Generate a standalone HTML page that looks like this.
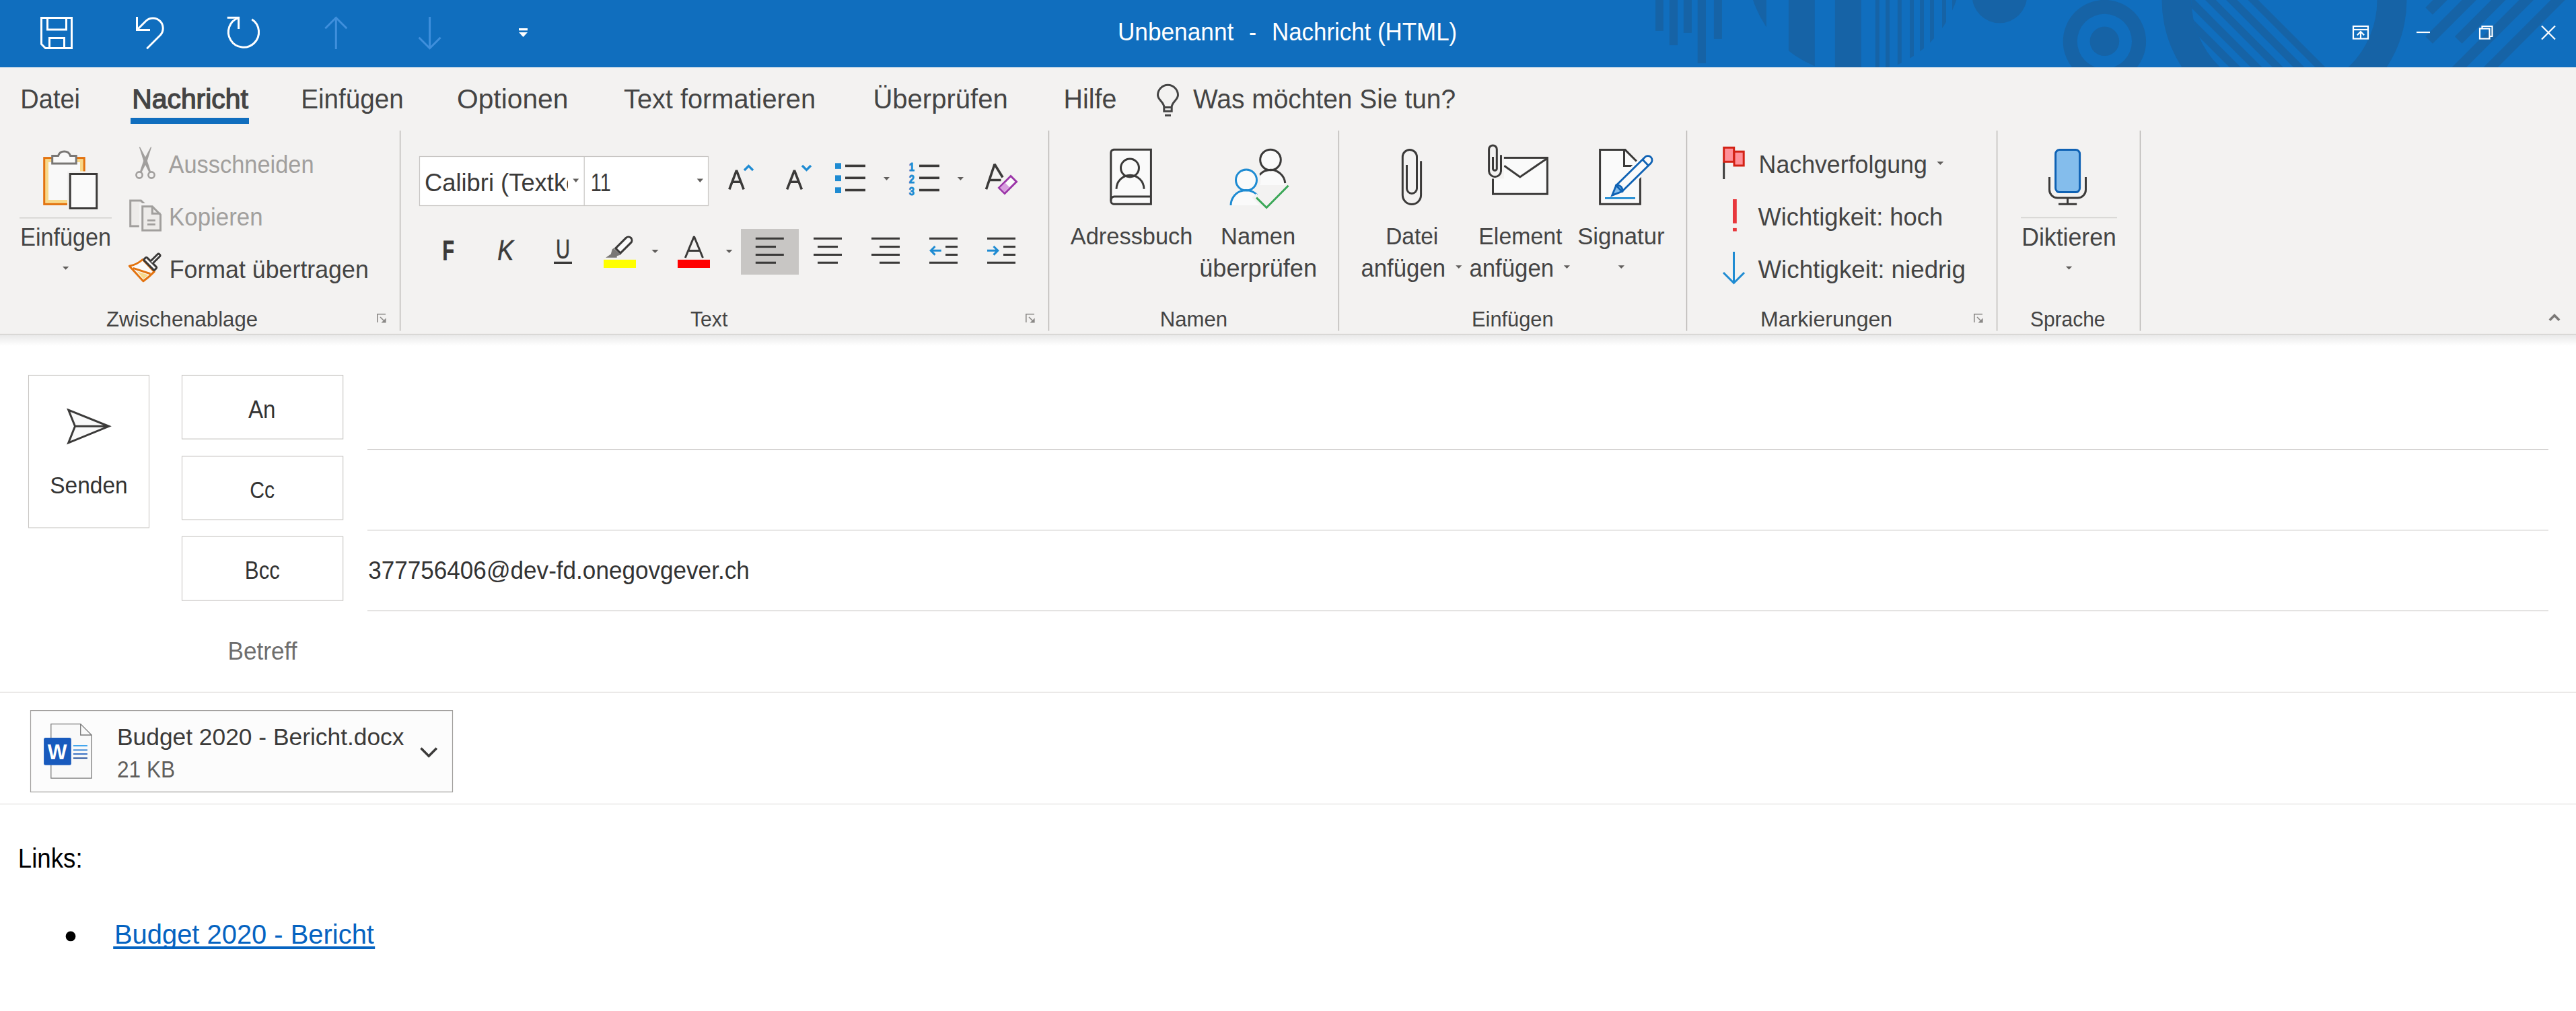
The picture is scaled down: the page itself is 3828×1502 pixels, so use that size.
<!DOCTYPE html>
<html><head><meta charset="utf-8"><title>Unbenannt - Nachricht (HTML)</title>
<style>
html,body{margin:0;padding:0;width:3828px;height:1502px;overflow:hidden;background:#fff;}
svg{display:block;font-family:"Liberation Sans",sans-serif;}
</style></head><body>
<svg width="3828" height="1502" viewBox="0 0 3828 1502">
<rect x="0" y="0" width="3828" height="1502" fill="#ffffff"/>
<rect x="0" y="0" width="3828" height="100" fill="#106ebe"/>
<defs>
<clipPath id="tb"><rect x="0" y="0" width="3828" height="100"/></clipPath>
<clipPath id="c1"><circle cx="2756.1" cy="-49.5" r="159"/></clipPath>
<clipPath id="c2in"><circle cx="3394.5" cy="0" r="138"/></clipPath>
</defs>
<g fill="#1663a6" clip-path="url(#tb)">
<rect x="2460.1" y="0" width="11.7" height="45.9"/>
<rect x="2480.8" y="0" width="12.2" height="67.1"/>
<rect x="2501.8" y="0" width="12.1" height="48.9"/>
<rect x="2522.7" y="0" width="12.3" height="94"/>
<rect x="2546.9" y="0" width="12.0" height="57.9"/>
<g clip-path="url(#c1)">
<rect x="2590" y="-10" width="34.9" height="120"/>
<rect x="2657.9" y="-10" width="38.9" height="120"/>
<rect x="2726.9" y="-10" width="38.9" height="120"/>
<rect x="2786.8" y="-10" width="6.0" height="120"/>
<rect x="2802" y="-10" width="6.0" height="120"/>
<rect x="2819.8" y="-10" width="6.0" height="120"/>
<rect x="2838" y="-10" width="6.0" height="120"/>
<rect x="2853" y="-10" width="6.0" height="120"/>
<rect x="2868" y="-10" width="6.0" height="120"/>
<rect x="2886" y="-10" width="6.0" height="120"/>
<rect x="2901" y="-10" width="6.4" height="120"/>
</g>
<circle cx="2971.4" cy="-6.5" r="40.8"/>
<path fill-rule="evenodd" d="M3189.1 61.5 A61.7 61.7 0 1 0 3065.7 61.5 A61.7 61.7 0 1 0 3189.1 61.5 Z M3168 61.5 A40.6 40.6 0 1 0 3086.8 61.5 A40.6 40.6 0 1 0 3168 61.5 Z"/>
<circle cx="3127.4" cy="61.3" r="21.8"/>
<path fill-rule="evenodd" d="M3576.5 0 A182 182 0 1 0 3212.5 0 A182 182 0 1 0 3576.5 0 Z M3532.5 0 A138 138 0 1 0 3256.5 0 A138 138 0 1 0 3532.5 0 Z"/>
<g clip-path="url(#c2in)">
<path d="M3181 0 L3197 0 L3397 200 L3381 200 Z"/>
<path d="M3213.1 0 L3230 0 L3430 200 L3413.1 200 Z"/>
<path d="M3244.8 0 L3261.6 0 L3461.6 200 L3444.8 200 Z"/>
<path d="M3277 0 L3292.8 0 L3492.8 200 L3477 200 Z"/>
<path d="M3308.1 0 L3324.5 0 L3524.5 200 L3508.1 200 Z"/>
<path d="M3340.5 0 L3355.6 0 L3555.6 200 L3540.5 200 Z"/>
</g>
<path d="M3615.5 0 L3636.7 0 L3614.90 21.80 L3604.30 11.20 Z"/>
<path d="M3658.5 0 L3679.8 0 L3614.95 64.85 L3604.30 54.20 Z"/>
<path d="M3702.1 0 L3723.4 0 L3658.55 64.85 L3647.90 54.20 Z"/>
<path d="M3743.5 0 L3765 0 L3565 200 L3543.5 200 Z"/>
<path d="M3790.5 0 L3811.7 0 L3611.7 200 L3590.5 200 Z"/>
</g>
<g fill="none" stroke="#ffffff" stroke-width="3">
<path d="M61.5 26.5 H106.5 V71.5 H67.5 L61.5 65.5 Z"/>
<path d="M70.5 26.5 V44 H98.5 V26.5"/>
<path d="M73.5 71.5 V56.5 H95.5 V71.5"/>
<path d="M203.5 25 V44.5 H223"/>
<path d="M203.5 44.5 L217 31 A15 15 0 0 1 238.2 52.2 L218.2 72.3"/>
<path d="M337.7 26.3 H354.6 V43"/>
<path d="M354.6 26.3 A22.6 22.6 0 1 0 374.3 28.7"/>
</g>
<g fill="none" stroke="#3f8fdc" stroke-width="3">
<path d="M499.3 26 V73"/><path d="M483.3 42.3 L499.3 26.3 L515.3 42.3"/>
<path d="M638.6 25 V72"/><path d="M622.6 55.7 L638.6 71.7 L654.6 55.7"/>
</g>
<rect x="771" y="42" width="13" height="3.3" fill="#fff"/><path d="M771 48 H784 L777.5 55 Z" fill="#fff"/>
<text x="1660.90" y="59.50" font-size="37.78" fill="#ffffff" textLength="172.38" lengthAdjust="spacingAndGlyphs">Unbenannt</text>
<text x="1856.00" y="59.50" font-size="37.50" fill="#ffffff" textLength="11.03" lengthAdjust="spacingAndGlyphs">-</text>
<text x="1890.00" y="59.50" font-size="37.78" fill="#ffffff" textLength="275.16" lengthAdjust="spacingAndGlyphs">Nachricht (HTML)</text>
<g fill="none" stroke="#ffffff" stroke-width="2.2">
<rect x="3497" y="39" width="22" height="18.5"/><path d="M3497 44 H3519"/><path d="M3508 57 V47.5 M3502.8 52.3 L3508 47 L3513.2 52.3"/>
<path d="M3591 48 H3611"/>
<rect x="3685" y="42.5" width="14.5" height="15"/><path d="M3688.5 42.5 V39 H3703.5 V54 H3699.5"/>
<path d="M3777 38.5 L3797 58.5 M3797 38.5 L3777 58.5"/>
</g>
<rect x="0" y="100" width="3828" height="396" fill="#f3f2f1"/>
<text x="30.30" y="160.90" font-size="39.72" fill="#444444" textLength="88.75" lengthAdjust="spacingAndGlyphs">Datei</text>
<text x="196.30" y="160.90" font-size="39.72" fill="#444444" textLength="172.48" lengthAdjust="spacingAndGlyphs" stroke="#444444" stroke-width="1.3">Nachricht</text>
<rect x="194" y="175" width="176" height="9" fill="#106ebe"/>
<text x="447.20" y="160.90" font-size="39.72" fill="#444444" textLength="152.62" lengthAdjust="spacingAndGlyphs">Einfügen</text>
<text x="679.00" y="160.90" font-size="39.72" fill="#444444" textLength="165.42" lengthAdjust="spacingAndGlyphs">Optionen</text>
<text x="927.00" y="160.90" font-size="39.72" fill="#444444" textLength="285.00" lengthAdjust="spacingAndGlyphs">Text formatieren</text>
<text x="1297.40" y="160.90" font-size="39.72" fill="#444444" textLength="200.35" lengthAdjust="spacingAndGlyphs">Überprüfen</text>
<text x="1580.60" y="160.90" font-size="39.72" fill="#444444" textLength="78.87" lengthAdjust="spacingAndGlyphs">Hilfe</text>
<text x="1773.00" y="160.90" font-size="39.72" fill="#444444" textLength="390.14" lengthAdjust="spacingAndGlyphs">Was möchten Sie tun?</text>
<g fill="none" stroke="#444444" stroke-width="3"><path d="M1729.8 159 C1729.8 151.5 1720.5 148.5 1720.5 141.3 A15 15 0 1 1 1750.5 141.3 C1750.5 148.5 1741.2 151.5 1741.2 159 V165.3 H1729.8 Z"/><path d="M1729.8 159.5 H1741.2"/><path d="M1731 171.4 H1740"/></g>
<g fill="#b8b6b4">
<rect x="593.9" y="194" width="1.4" height="297.6"/>
<rect x="1557.8" y="194" width="1.4" height="297.6"/>
<rect x="1988.7" y="194" width="1.4" height="297.6"/>
<rect x="2505.8" y="194" width="1.4" height="297.6"/>
<rect x="2966.9" y="194" width="1.4" height="297.6"/>
<rect x="3179.7" y="194" width="1.4" height="297.6"/>
</g>
<rect x="0" y="495.9" width="3828" height="1.3" fill="#d2d0ce"/>
<defs><linearGradient id="sh" x1="0" y1="0" x2="0" y2="1"><stop offset="0" stop-color="#000" stop-opacity="0.09"/><stop offset="1" stop-color="#000" stop-opacity="0"/></linearGradient></defs>
<rect x="0" y="497" width="3828" height="17" fill="url(#sh)"/>
<text x="158.00" y="485.10" font-size="32.08" fill="#444444" textLength="225.06" lengthAdjust="spacingAndGlyphs">Zwischenablage</text>
<text x="1026.00" y="485.10" font-size="32.08" fill="#444444" textLength="55.34" lengthAdjust="spacingAndGlyphs">Text</text>
<text x="1723.80" y="485.10" font-size="32.08" fill="#444444" textLength="100.41" lengthAdjust="spacingAndGlyphs">Namen</text>
<text x="2187.00" y="485.10" font-size="32.08" fill="#444444" textLength="121.65" lengthAdjust="spacingAndGlyphs">Einfügen</text>
<text x="2616.00" y="485.10" font-size="32.08" fill="#444444" textLength="196.17" lengthAdjust="spacingAndGlyphs">Markierungen</text>
<text x="3017.00" y="485.10" font-size="32.08" fill="#444444" textLength="111.53" lengthAdjust="spacingAndGlyphs">Sprache</text>
<g fill="none" stroke="#8a8886" stroke-width="1.6"><path d="M560.8 479 V466.8 H573"/><path d="M565 471 L572.5 478.5"/></g><path d="M573.6 472.5 V479.6 H566.5 Z" fill="#8a8886"/>
<g fill="none" stroke="#8a8886" stroke-width="1.6"><path d="M1524.8 479 V466.8 H1537"/><path d="M1529 471 L1536.5 478.5"/></g><path d="M1537.6 472.5 V479.6 H1530.5 Z" fill="#8a8886"/>
<g fill="none" stroke="#8a8886" stroke-width="1.6"><path d="M2933.8 479 V466.8 H2946"/><path d="M2938 471 L2945.5 478.5"/></g><path d="M2946.6 472.5 V479.6 H2939.5 Z" fill="#8a8886"/>
<path d="M3788.8 475.8 L3796 468.6 L3803.2 475.8" fill="none" stroke="#7a7876" stroke-width="3.6"/>
<rect x="65.7" y="234.6" width="59.5" height="68.8" fill="#f8d88a" stroke="#e3730f" stroke-width="3"/>
<rect x="72" y="241" width="47" height="56" fill="#f9f9f9"/>
<path d="M77.7 243.1 V231.5 H86.5 A9.5 9.5 0 0 1 104.5 231.5 H113.2 V243.1 Z" fill="#f9f9f9" stroke="#797775" stroke-width="3"/>
<rect x="100" y="254.5" width="48" height="58" fill="#f3f2f1"/>
<rect x="104.2" y="258.5" width="39.5" height="51" fill="#fafafa" stroke="#3b3a39" stroke-width="3"/>
<rect x="29" y="323" width="137" height="1.5" fill="#d2d0ce"/>
<text x="30.20" y="365.40" font-size="36.25" fill="#444444" textLength="134.67" lengthAdjust="spacingAndGlyphs">Einfügen</text>
<path d="M93 396 H102.3 L97.65 400.7 Z" fill="#605e5c"/>
<g fill="#a19f9d"><path d="M206.8 218.2 L208 218.2 L218.5 238 L224 254.5 L221.5 256 L213.5 240 Z"/><path d="M225.2 218.2 L224 218.2 L213.5 238 L208 254.5 L210.5 256 L218.5 240 Z"/></g>
<g fill="none" stroke="#a19f9d" stroke-width="2.6"><circle cx="207" cy="260" r="4.6"/><circle cx="225" cy="260" r="4.6"/></g>
<text x="250.50" y="256.90" font-size="36.39" fill="#a19f9d" textLength="216.07" lengthAdjust="spacingAndGlyphs">Ausschneiden</text>
<path d="M193.7 336 V298.1 H209.5 L214.5 303 V336 Z" fill="#edebe9" stroke="#a19f9d" stroke-width="3"/>
<rect x="206.8" y="302" width="37" height="46" fill="#f3f2f1"/>
<path d="M211.7 306.8 H226.3 L238.5 319 V342.2 H211.7 Z" fill="#edebe9" stroke="#a19f9d" stroke-width="3"/>
<path d="M226.3 306.8 V317.2 H238.5" fill="none" stroke="#a19f9d" stroke-width="3"/>
<g fill="#a19f9d"><rect x="219" y="326.1" width="11.8" height="2.8"/><rect x="219" y="332" width="11.8" height="2.8"/></g>
<text x="251.00" y="335.00" font-size="36.11" fill="#a19f9d" textLength="139.53" lengthAdjust="spacingAndGlyphs">Kopieren</text>
<path d="M212 385.5 Q203.5 393.2 192.3 395.2 L212.9 417.8 Q222 411 229.2 403.6 Z" fill="#fafafa" stroke="#e3730f" stroke-width="3" stroke-linejoin="round"/>
<path d="M203.6 403.2 L220.4 408.6 L213.3 414.4 Z" fill="#f8d88a"/>
<path d="M197.8 398.4 L223.6 406.7" fill="none" stroke="#e3730f" stroke-width="3"/>
<g transform="translate(223.3 391.8) rotate(-45)"><rect x="-3" y="-11.2" width="6" height="22.4" rx="2" fill="#fafafa" stroke="#3b3a39" stroke-width="3"/><path d="M3 -2.3 H17.3 A2.3 2.3 0 0 1 17.3 2.3 H3" fill="#fafafa" stroke="#3b3a39" stroke-width="3"/></g>
<text x="251.70" y="413.20" font-size="36.39" fill="#444444" textLength="296.08" lengthAdjust="spacingAndGlyphs">Format übertragen</text>
<rect x="623.5" y="232.5" width="429" height="73" fill="#ffffff" stroke="#c8c6c4" stroke-width="1.2"/>
<rect x="867.6" y="232.5" width="1.2" height="73" fill="#c8c6c4"/>
<clipPath id="fc"><rect x="624" y="233" width="220" height="72"/></clipPath>
<text x="630.90" y="284.20" font-size="36.39" fill="#3b3a39" textLength="307.23" lengthAdjust="spacingAndGlyphs" clip-path="url(#fc)">Calibri (Textkörper)</text>
<path d="M851.3 265.5 H860.2 L855.75 271 Z" fill="#605e5c"/>
<text x="877.70" y="284.20" font-size="36.39" fill="#3b3a39" textLength="30.11" lengthAdjust="spacingAndGlyphs">11</text>
<path d="M1035.7 265.5 H1045 L1040.35 271 Z" fill="#605e5c"/>
<g fill="none" stroke="#3b3a39" stroke-width="3.6" stroke-linejoin="bevel"><path d="M1083.8 281.3 L1094.5 253.2 L1105.2 281.3 M1088 270.3 H1101"/><path d="M1169.6 281.3 L1180.5 253.2 L1191.4 281.3 M1174 270.3 H1187"/></g>
<g fill="none" stroke="#1e8bd2" stroke-width="3.3"><path d="M1106 253 L1112.5 246.5 L1119 253"/><path d="M1192 246 L1198.5 252.5 L1205 246"/></g>
<g fill="#1e8bd2"><rect x="1241" y="242.3" width="9" height="8.6"/><rect x="1241" y="260.4" width="9" height="8.7"/><rect x="1241" y="278.3" width="9" height="8.7"/></g>
<g fill="#3b3a39"><rect x="1256" y="244.6" width="30" height="3.6"/><rect x="1256" y="262.5" width="30" height="3.6"/><rect x="1256" y="280.7" width="30" height="3.6"/></g>
<path d="M1313 263 H1322 L1317.5 267.9 Z" fill="#605e5c"/>
<text x="1350.70" y="253.60" font-size="15.69" fill="#1e8bd2" font-weight="bold" textLength="8.04" lengthAdjust="spacingAndGlyphs" stroke="#1e8bd2" stroke-width="0.9">1</text>
<text x="1350.70" y="271.80" font-size="15.83" fill="#1e8bd2" font-weight="bold" textLength="8.11" lengthAdjust="spacingAndGlyphs" stroke="#1e8bd2" stroke-width="0.9">2</text>
<text x="1350.70" y="290.00" font-size="15.83" fill="#1e8bd2" font-weight="bold" textLength="8.11" lengthAdjust="spacingAndGlyphs" stroke="#1e8bd2" stroke-width="0.9">3</text>
<g fill="#3b3a39"><rect x="1366" y="244.6" width="30" height="3.6"/><rect x="1366" y="262.5" width="30" height="3.6"/><rect x="1366" y="280.7" width="30" height="3.6"/></g>
<path d="M1422.7 263 H1432 L1427.35 267.9 Z" fill="#605e5c"/>
<path d="M1465.5 281.3 L1478 244 L1490 263.5 M1470.5 267.5 H1487.5" fill="none" stroke="#3b3a39" stroke-width="3.6" stroke-linejoin="bevel"/>
<path d="M1484.5 279 L1502 261.5 L1510.5 270 L1493 287.5 Z" fill="#fafafa" stroke="#9b35a8" stroke-width="3"/>
<path d="M1486 279 L1493.5 271.5 L1500 278 L1492.5 285.5 Z" fill="#d89fdf"/>
<text x="657.40" y="385.80" font-size="41.53" fill="#3b3a39" font-weight="bold" textLength="17.45" lengthAdjust="spacingAndGlyphs" stroke="#3b3a39" stroke-width="0.8">F</text>
<text x="739.30" y="385.90" font-size="41.81" fill="#3b3a39" font-style="italic" textLength="23.97" lengthAdjust="spacingAndGlyphs" stroke="#3b3a39" stroke-width="0.5">K</text>
<text x="825.90" y="384.40" font-size="39.72" fill="#3b3a39" textLength="21.07" lengthAdjust="spacingAndGlyphs" stroke="#3b3a39" stroke-width="0.6">U</text>
<rect x="823" y="388.7" width="27" height="3.3" fill="#3b3a39"/>
<g transform="translate(917.3 373.6) rotate(-45)"><path d="M1.5 -5.1 H23.5 A5.1 5.1 0 0 1 23.5 5.1 H1.5 Z" fill="#fafafa" stroke="#3b3a39" stroke-width="3"/></g>
<path d="M911.5 368.7 L922.8 378.6 L916.7 380.3 L916.7 382.7 L900.1 382.7 L907.8 377.4 L909.6 370.8 Z" fill="#797775"/>
<rect x="897" y="385.8" width="48" height="12.2" fill="#ffff00"/>
<path d="M968.4 370.9 H978.5 L973.45 376 Z" fill="#605e5c"/>
<path d="M1018.3 383 L1031.4 351.2 L1044.5 383 M1023.8 372.5 H1039" fill="none" stroke="#3b3a39" stroke-width="3" stroke-linejoin="bevel"/>
<rect x="1007" y="385.8" width="48" height="12.2" fill="#ff0000"/>
<path d="M1078.8 370.9 H1088.3 L1083.55 376 Z" fill="#605e5c"/>
<rect x="1101" y="340" width="86" height="68" fill="#c8c6c4"/>
<g fill="#3b3a39">
<rect x="1122.8" y="352.8" width="42.0" height="3.1"/>
<rect x="1122.8" y="365" width="30.200000000000045" height="3.1"/>
<rect x="1122.8" y="376.9" width="42.0" height="3.1"/>
<rect x="1122.8" y="388.7" width="30.200000000000045" height="3.1"/>
<rect x="1209" y="352.8" width="42" height="3.1"/>
<rect x="1215" y="365" width="30" height="3.1"/>
<rect x="1209" y="376.9" width="42" height="3.1"/>
<rect x="1215" y="388.7" width="30" height="3.1"/>
<rect x="1295" y="352.8" width="42" height="3.1"/>
<rect x="1307" y="365" width="30" height="3.1"/>
<rect x="1295" y="376.9" width="42" height="3.1"/>
<rect x="1307" y="388.7" width="30" height="3.1"/>
<rect x="1381" y="352.8" width="42" height="3.1"/>
<rect x="1405" y="365" width="18" height="3.1"/>
<rect x="1405" y="376.9" width="18" height="3.1"/>
<rect x="1381" y="388.7" width="42" height="3.1"/>
<rect x="1467" y="352.8" width="42" height="3.1"/>
<rect x="1491" y="365" width="18" height="3.1"/>
<rect x="1491" y="376.9" width="18" height="3.1"/>
<rect x="1467" y="388.7" width="42" height="3.1"/>
</g>
<g fill="none" stroke="#1e8bd2" stroke-width="3"><path d="M1383 372.3 H1398.7 M1389.5 366 L1383.2 372.3 L1389.5 378.6"/><path d="M1467 372.3 H1483 M1476.5 366 L1482.8 372.3 L1476.5 378.6"/></g>
<g fill="#fafafa" stroke="#3b3a39" stroke-width="3"><path d="M1655 222.3 H1710.4 V303.3 H1655 A5 5 0 0 1 1650.8 298 V227 A5 5 0 0 1 1655 222.3 Z"/></g>
<g fill="none" stroke="#3b3a39" stroke-width="3"><path d="M1651 298 A5 5 0 0 1 1655.5 292 H1710.4"/><circle cx="1679" cy="249.5" r="13.5"/><path d="M1659 280.7 A20.5 20.5 0 0 1 1700 280.7"/></g>
<path d="M1866.5 276 A21.5 21.5 0 0 1 1909.5 276 V275 H1866.5 Z" fill="#fafafa"/>
<g fill="#fafafa" stroke="#3b3a39" stroke-width="3"><circle cx="1888" cy="237.5" r="15.3"/></g>
<path d="M1866.5 276 A21.5 21.5 0 0 1 1909.8 272" fill="none" stroke="#3b3a39" stroke-width="3"/>
<circle cx="1852" cy="267.5" r="21.5" fill="#f3f2f1"/>
<path d="M1822 306 A29.5 29.5 0 0 1 1881 306 Z" fill="#f3f2f1"/>
<path d="M1829 305 A22.7 22.7 0 0 1 1874.4 305 Z" fill="#fafafa"/>
<circle cx="1852" cy="267.5" r="15.5" fill="#fafafa" stroke="#1e8bd2" stroke-width="3"/>
<path d="M1829 305 A22.7 22.7 0 0 1 1868 289.5" fill="none" stroke="#1e8bd2" stroke-width="3"/>
<path d="M1867 293.6 L1882.1 308.5 L1914.5 275.8" fill="none" stroke="#f3f2f1" stroke-width="9" stroke-linecap="square"/>
<path d="M1867 293.6 L1882.1 308.5 L1914.5 275.8" fill="none" stroke="#3aa757" stroke-width="3"/>
<text x="1590.80" y="362.70" font-size="35.56" fill="#444444" textLength="181.63" lengthAdjust="spacingAndGlyphs">Adressbuch</text>
<text x="1814.00" y="362.70" font-size="35.56" fill="#444444" textLength="111.19" lengthAdjust="spacingAndGlyphs">Namen</text>
<text x="1782.20" y="410.70" font-size="36.11" fill="#444444" textLength="174.84" lengthAdjust="spacingAndGlyphs">überprüfen</text>
<path d="M2090.5 245.1 V279.9 A7.5 7.5 0 0 0 2105.5 279.9 V233.1 A10.6 10.6 0 0 0 2084.3 233.1 V289.8 A13.65 13.65 0 0 0 2111.6 289.8 V239.3" fill="none" stroke="#3b3a39" stroke-width="3"/>
<rect x="2218.5" y="234.4" width="80.9" height="53.8" fill="#fafafa" stroke="#3b3a39" stroke-width="3"/>
<path d="M2235.3 246.2 L2258.8 263 L2299.2 235.2" fill="none" stroke="#3b3a39" stroke-width="3"/>
<rect x="2208" y="214" width="26.9" height="51.5" fill="#f3f2f1"/>
<path d="M2218.5 233.1 V250.4 A2.9 2.9 0 0 0 2224.3 250.4 V221.8 A5.85 5.85 0 0 0 2212.6 221.8 V253.7 A8.95 8.95 0 0 0 2230.5 253.7 V230.2" fill="none" stroke="#3b3a39" stroke-width="3"/>
<clipPath id="pg"><rect x="2376" y="221" width="63" height="84"/></clipPath>
<path d="M2377.6 222.6 H2415 L2437.4 245 V303.2 H2377.6 Z" fill="#fafafa" stroke="#3b3a39" stroke-width="3"/>
<path d="M2413.5 222.6 V246.5 H2437" fill="none" stroke="#3b3a39" stroke-width="3"/>
<rect x="2385" y="293" width="45" height="2.8" fill="#1e8bd2"/>
<g clip-path="url(#pg)"><g transform="translate(2406 280) rotate(-44.5)"><path d="M0 -6.25 H60 A6.25 6.25 0 0 1 60 6.25 H0 Z" fill="#fafafa" stroke="#fafafa" stroke-width="9" stroke-linejoin="round"/></g></g>
<g transform="translate(2406 280) rotate(-44.5)"><path d="M0 -6.25 H60 A6.25 6.25 0 0 1 60 6.25 H0 Z" fill="#fafafa" stroke="#0f62b4" stroke-width="2.8"/><path d="M55 -6.25 V6.25" stroke="#0f62b4" stroke-width="2.8"/><path d="M0 -6.25 A7 7 0 0 1 0 6.25 Z" fill="#84bdec"/><path d="M0 -6.25 L-14.5 0 L0 6.25 Z" fill="#84bdec" stroke="#0f62b4" stroke-width="2.8" stroke-linejoin="miter"/><path d="M0 -6.25 A7 7 0 0 1 0 6.25" fill="none" stroke="#0f62b4" stroke-width="2.8"/></g>
<text x="2059.20" y="362.70" font-size="35.00" fill="#444444" textLength="78.03" lengthAdjust="spacingAndGlyphs">Datei</text>
<text x="2022.40" y="410.60" font-size="36.11" fill="#444444" textLength="125.72" lengthAdjust="spacingAndGlyphs">anfügen</text>
<path d="M2163.2 394.3 H2172.3 L2167.75 399.1 Z" fill="#605e5c"/>
<text x="2197.30" y="362.70" font-size="35.00" fill="#444444" textLength="124.13" lengthAdjust="spacingAndGlyphs">Element</text>
<text x="2183.40" y="410.60" font-size="36.11" fill="#444444" textLength="125.72" lengthAdjust="spacingAndGlyphs">anfügen</text>
<path d="M2323.8 394.3 H2333 L2328.4 399.1 Z" fill="#605e5c"/>
<text x="2344.20" y="362.70" font-size="35.00" fill="#444444" textLength="129.48" lengthAdjust="spacingAndGlyphs">Signatur</text>
<path d="M2404.7 394.3 H2414 L2409.35 399.1 Z" fill="#605e5c"/>
<rect x="2560.2" y="241" width="3" height="25" fill="#3b3a39"/>
<rect x="2561.7" y="219.3" width="15" height="21" fill="#ff9098" stroke="#d32215" stroke-width="3"/>
<rect x="2577" y="225.2" width="14.2" height="20.8" fill="#ff9098" stroke="#d32215" stroke-width="3"/>
<text x="2613.60" y="257.00" font-size="36.25" fill="#444444" textLength="250.28" lengthAdjust="spacingAndGlyphs">Nachverfolgung</text>
<path d="M2878.3 239.9 H2888.3 L2883.3 245 Z" fill="#605e5c"/>
<rect x="2575" y="296" width="5.8" height="35.8" fill="#e8383d"/><rect x="2575" y="338.9" width="5.8" height="4.7" fill="#e8383d"/>
<text x="2612.40" y="335.30" font-size="36.94" fill="#444444" textLength="274.82" lengthAdjust="spacingAndGlyphs">Wichtigkeit: hoch</text>
<g fill="none" stroke="#1e8bd2" stroke-width="3"><path d="M2576.5 374 V420"/><path d="M2561 405 L2576.5 420.5 L2592 405"/></g>
<text x="2612.40" y="413.00" font-size="36.94" fill="#444444" textLength="308.60" lengthAdjust="spacingAndGlyphs">Wichtigkeit: niedrig</text>
<rect x="3054.6" y="222.6" width="36" height="63" rx="6" fill="#84bdec" stroke="#0f62b4" stroke-width="3"/>
<g fill="none" stroke="#3b3a39" stroke-width="3"><path d="M3045.5 263 V282 A12 12 0 0 0 3057.5 294 H3087.5 A12 12 0 0 0 3099.5 282 V263"/><path d="M3072.5 294 V303 M3059 303.2 H3086.2"/></g>
<rect x="3003" y="322.7" width="143" height="1.5" fill="#d2d0ce"/>
<text x="3004.20" y="365.40" font-size="37.22" fill="#444444" textLength="140.67" lengthAdjust="spacingAndGlyphs">Diktieren</text>
<path d="M3069.9 395.8 H3079.2 L3074.55 400.6 Z" fill="#605e5c"/>
<rect x="42.5" y="557.5" width="179" height="226.5" fill="#fff" stroke="#c8c6c4" stroke-width="1.1"/>
<path d="M101.8 609.2 L161.8 633.3 L101.8 657.8 L111.5 633.3 Z M111.5 633.3 H161.8" fill="#f9f9f9" stroke="#3b3a39" stroke-width="3" stroke-linejoin="miter"/>
<text x="74.20" y="733.40" font-size="34.58" fill="#333333" textLength="115.53" lengthAdjust="spacingAndGlyphs">Senden</text>
<rect x="270.5" y="557.5" width="239.2" height="94.6" fill="#fff" stroke="#c8c6c4" stroke-width="1.1"/>
<text x="369.00" y="620.50" font-size="36.11" fill="#333333" textLength="40.54" lengthAdjust="spacingAndGlyphs">An</text>
<rect x="270.5" y="677.9" width="239.2" height="94.1" fill="#fff" stroke="#c8c6c4" stroke-width="1.1"/>
<text x="371.30" y="739.80" font-size="35.28" fill="#333333" textLength="36.79" lengthAdjust="spacingAndGlyphs">Cc</text>
<rect x="270.5" y="797.1" width="239.2" height="95.1" fill="#fff" stroke="#c8c6c4" stroke-width="1.1"/>
<text x="363.80" y="860.40" font-size="36.39" fill="#333333" textLength="52.09" lengthAdjust="spacingAndGlyphs">Bcc</text>
<rect x="546" y="667.0" width="3241" height="1.1" fill="#c8c6c4"/>
<rect x="546" y="787.0" width="3241" height="1.1" fill="#c8c6c4"/>
<rect x="546" y="907.0" width="3241" height="1.1" fill="#c8c6c4"/>
<text x="547.20" y="860.40" font-size="36.39" fill="#333333" textLength="566.54" lengthAdjust="spacingAndGlyphs">377756406@dev-fd.onegovgever.ch</text>
<text x="338.60" y="980.20" font-size="36.81" fill="#6e6e6e" textLength="102.88" lengthAdjust="spacingAndGlyphs">Betreff</text>
<rect x="0" y="1027.8" width="3828" height="1.2" fill="#e1dfdd"/>
<rect x="45.5" y="1055.6" width="627" height="121" fill="#fcfcfc" stroke="#a19f9d" stroke-width="1.2"/>
<path d="M75.8 1075.6 H119.7 L136.1 1092 V1156.1 H75.8 Z" fill="#f9f9f9" stroke="#7a7a7a" stroke-width="1.3"/>
<path d="M119.7 1075.6 V1092 H136.1" fill="none" stroke="#7a7a7a" stroke-width="1.3"/>
<rect x="108.9" y="1107" width="21" height="1.8" fill="#41a5ee"/><rect x="108.9" y="1113.4" width="21" height="1.8" fill="#2b7cd3"/><rect x="108.9" y="1119.3" width="21" height="1.8" fill="#185abd"/><rect x="108.9" y="1125.4" width="21" height="1.8" fill="#103f91"/>
<rect x="65.1" y="1095.9" width="40.7" height="40.9" rx="2.5" fill="#185abd"/>
<text x="70.80" y="1127.70" font-size="31.39" fill="#ffffff" font-weight="bold" textLength="28.72" lengthAdjust="spacingAndGlyphs">W</text>
<text x="174.00" y="1107.10" font-size="34.44" fill="#3b3a39" textLength="426.45" lengthAdjust="spacingAndGlyphs">Budget 2020 - Bericht.docx</text>
<text x="174.00" y="1154.80" font-size="34.86" fill="#605e5c" textLength="86.07" lengthAdjust="spacingAndGlyphs">21 KB</text>
<path d="M625.5 1111.5 L637.2 1123.2 L648.9 1111.5" fill="none" stroke="#3b3a39" stroke-width="3.5"/>
<rect x="0" y="1193.9" width="3828" height="1.2" fill="#e1dfdd"/>
<text x="26.80" y="1289.40" font-size="40.14" fill="#000000" textLength="95.83" lengthAdjust="spacingAndGlyphs">Links:</text>
<circle cx="105" cy="1390.9" r="7.4" fill="#000"/>
<text x="170.00" y="1401.90" font-size="39.86" fill="#0563c1" textLength="385.92" lengthAdjust="spacingAndGlyphs">Budget 2020 - Bericht</text>
<rect x="168.2" y="1406" width="389" height="4" fill="#0563c1"/>
</svg>
</body></html>
